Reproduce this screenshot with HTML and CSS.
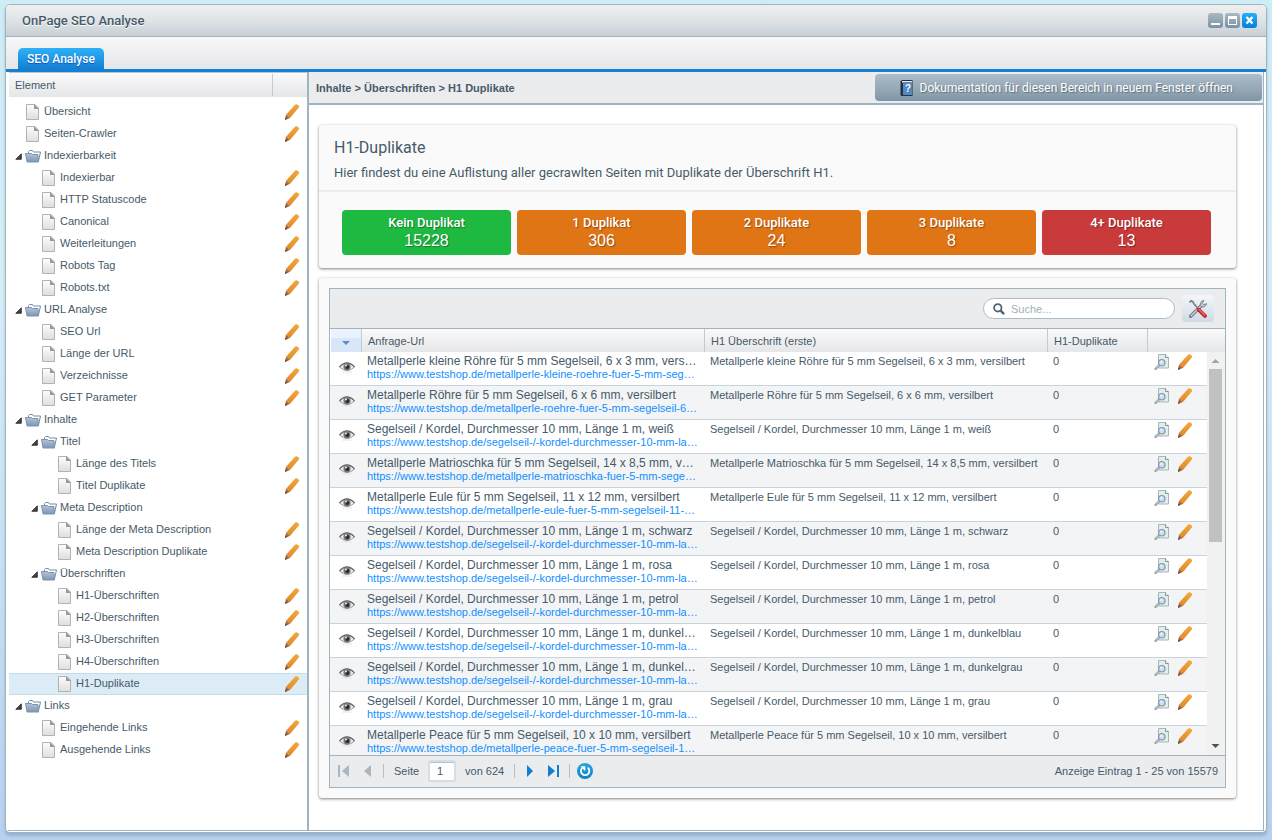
FILE: index.html
```html
<!DOCTYPE html>
<html lang="de">
<head>
  <meta charset="UTF-8" />
  <meta name="viewport" content="width=device-width, initial-scale=1" />
  <title>OnPage SEO Analyse</title>
  <link rel="stylesheet" href="styles.css">
</head>
<body>

  <!-- Icons -->
  <svg class="sprite" aria-hidden="true">
    <defs>
      <linearGradient id="gPage" x1="0" y1="0" x2="0" y2="1"><stop offset="0" stop-color="#fdfdfd"/><stop offset="1" stop-color="#dedede"/></linearGradient>
      <linearGradient id="gFolder" x1="0" y1="0" x2="0" y2="1"><stop offset="0" stop-color="#b3c3d6"/><stop offset="1" stop-color="#7d97b4"/></linearGradient>
      <linearGradient id="gPencil" x1="0" y1="0" x2="0" y2="1"><stop offset="0" stop-color="#f2a93c"/><stop offset="1" stop-color="#e0892b"/></linearGradient>
      <linearGradient id="gRefresh" x1="0" y1="0" x2="0" y2="1"><stop offset="0" stop-color="#29a5df"/><stop offset="1" stop-color="#0f80c2"/></linearGradient>
    </defs>
    <symbol id="i-page" viewBox="0 0 16 16">
      <path d="M1.500.5h8.500l3.500 3.500v11.500h-12z" fill="url(#gPage)" stroke="#b2b2b2"/>
      <path d="M9 0l5 5H9z" fill="#999"/>
    </symbol>
    <symbol id="i-folder" viewBox="0 0 16 16">
      <path d="M3.500 5V3.500l1-1h3l1 1.500h7L13.500 13" fill="#fff" stroke="#6f8ca8"/>
      <path d="M.5 5.500h6l1 1h5.500l.5 7.500H2z" fill="url(#gFolder)" stroke="#7b94b0"/>
    </symbol>
    <symbol id="i-arrow" viewBox="0 0 7 7">
      <path d="M.8 6.300h5.500V.8z" fill="#444" stroke="#222" stroke-width=".8"/>
    </symbol>
    <symbol id="i-pencil" viewBox="0 0 16 16">
      <path d="M11.200.6q1.200-.8 2.200 0l1.200 1q1 .9.200 2L6.200 13.800 2 10.700z" fill="url(#gPencil)"/>
      <path d="M2 10.700l4.200 3.100L1 16z" fill="#a9663e"/>
      <path d="M1.400 13.200L1 16l2.800-1.200z" fill="#75503f"/>
    </symbol>
    <symbol id="i-eye" viewBox="0 0 16 12">
      <path d="M.5 6Q8-2 15.500 6 8 13 .5 6z" fill="#ececec" stroke="#999"/>
      <path d="M.5 5.800Q8-2 15.500 5.800" fill="none" stroke="#666" stroke-width="1.200"/>
      <circle cx="8" cy="5.800" r="3.600" fill="#77757d"/>
      <circle cx="8.300" cy="6" r="2" fill="#2b2a30"/>
      <circle cx="7" cy="4.600" r="1" fill="#eee"/>
      <path d="M3 11h10" stroke="#e3e3e3"/>
    </symbol>
    <symbol id="i-preview" viewBox="0 0 16 16">
      <path d="M4.500.5h7l3 3v10.500h-10z" fill="#e3eeec" stroke="#a3b8b5"/>
      <path d="M11.500.5v3h3" fill="#fff" stroke="#7d9895"/>
      <path d="M1.600 14.800l3.400-3.300" stroke="#8d9c9e" stroke-width="2.400" stroke-linecap="round"/>
      <path d="M1.600 14.800l3.400-3.300" stroke="#e6ecec" stroke-width=".8"/>
      <circle cx="7.800" cy="8.700" r="3.200" fill="#c9def6" stroke="#8499a5" stroke-width="1.200"/>
      <circle cx="7.200" cy="8" r="1" fill="#f4f9ff"/>
    </symbol>
    <symbol id="i-search" viewBox="0 0 12 12">
      <circle cx="4.800" cy="4.800" r="3.700" fill="none" stroke="#4d6377" stroke-width="1.800"/>
      <path d="M7.600 7.600l3.500 3.500" stroke="#4d6377" stroke-width="2.400"/>
    </symbol>
    <symbol id="i-tools" viewBox="0 0 16 16">
      <path d="M1.500 14.500L11.500 4.500" stroke="#6f777e" stroke-width="3" stroke-linecap="round"/>
      <path d="M1.500 14.500L11.500 4.500" stroke="#c9ced2" stroke-width="1.400"/>
      <path d="M13.300.5L11.800 2.800l1.500 1.500 2.300-1.200a3.300 3.300 0 0 1-4.600 2.900A3.200 3.200 0 0 1 13.300.5z" fill="#c4c9cd" stroke="#777f86" stroke-width=".8"/>
      <path d="M.5 2.200L2 .6l1.800 1.200.2 1.200L8.500 8" fill="none" stroke="#7a8289" stroke-width="1.500"/>
      <path d="M8.700 8.700l5.500 5.500" stroke="#c62a2a" stroke-width="3.400" stroke-linecap="round"/>
      <path d="M8.700 8.200l5.500 5.500" stroke="#f07a72"/>
    </symbol>
    <symbol id="i-first" viewBox="0 0 12 12">
      <path d="M0 0h2v12H0z"/><path d="M11 0v12L4 6z"/>
    </symbol>
    <symbol id="i-prev" viewBox="0 0 12 12"><path d="M9 0v12L2 6z"/></symbol>
    <symbol id="i-next" viewBox="0 0 12 12"><path d="M3 0v12l6-6z"/></symbol>
    <symbol id="i-last" viewBox="0 0 12 12">
      <path d="M0 0v12l7-6z"/><path d="M9 0h2v12H9z"/>
    </symbol>
    <symbol id="i-refresh" viewBox="0 0 16 16">
      <circle cx="8" cy="8" r="8" fill="url(#gRefresh)"/>
      <path d="M10.800 4.800a4.200 4.200 0 1 1-5.500.1" fill="none" stroke="#fff" stroke-width="1.800"/>
      <path d="M3.500 3.200h4.800v5z" fill="#fff"/>
    </symbol>
  </svg>

  <div class="window">
    <header class="titlebar">
      <h1>OnPage SEO Analyse</h1>
      <div class="window-tools">
        <button class="tool" aria-label="Minimieren"><svg viewBox="0 0 15 15"><path d="M3 10h9v2H3z" fill="#fff"/></svg></button>
        <button class="tool" aria-label="Maximieren"><svg viewBox="0 0 15 15"><path d="M3 3h9v9H3zM4 6v5h7V6z" fill="#fff" fill-rule="evenodd"/></svg></button>
        <button class="tool close" aria-label="Schließen"><svg viewBox="0 0 15 15"><path d="M4.500 4l6 6.500M10.500 4l-6 6.500" stroke="#fff" stroke-width="2.400"/></svg></button>
      </div>
    </header>

    <nav class="tabs">
      <button class="tab">SEO Analyse</button>
    </nav>

    <div class="workspace">
      <aside class="sidebar">
        <div class="tree-head"><span>Element</span><span class="tree-head-edit"></span></div>
        <ul class="tree" id="tree"></ul>
      </aside>

      <main class="main">
        <div class="breadcrumb">
          <span>Inhalte &gt; Überschriften &gt; H1 Duplikate</span>
          <button class="btn-doc">
            <svg class="icon" viewBox="0 0 16 16">
              <path d="M1.500 1.500L3 0h10.500v16H2.500l-1-1z" fill="#23313f"/>
              <path d="M3 1h10v1.500H3z" fill="#dfe8ef"/>
              <path d="M4 2.500h9V15H4z" fill="#5189cb"/>
              <text x="6" y="12" class="book-mark">?</text>
            </svg>
            Dokumentation für diesen Bereich in neuem Fenster öffnen
          </button>
        </div>

        <div class="content">
          <section class="card">
            <div class="card-head">
              <h2>H1-Duplikate</h2>
              <p>Hier findest du eine Auflistung aller gecrawlten Seiten mit Duplikate der Überschrift H1.</p>
            </div>
            <div class="stats">
              <button class="stat green">Kein Duplikat<strong>15228</strong></button>
              <button class="stat">1 Duplikat<strong>306</strong></button>
              <button class="stat">2 Duplikate<strong>24</strong></button>
              <button class="stat">3 Duplikate<strong>8</strong></button>
              <button class="stat red">4+ Duplikate<strong>13</strong></button>
            </div>
          </section>

          <section class="card card-grid">
            <div class="grid">
              <div class="grid-toolbar">
                <label class="search">
                  <svg><use href="#i-search"/></svg>
                  <input type="text" placeholder="Suche..." aria-label="Suche" />
                </label>
                <button class="btn-tools" aria-label="Einstellungen"><svg><use href="#i-tools"/></svg></button>
              </div>

              <table class="grid-head">
                <thead>
                  <tr>
                    <th class="col-eye"><svg viewBox="0 0 8 4"><path d="M0 0h8L4 4z" fill="#5b8dd0"/></svg></th>
                    <th>Anfrage-Url</th>
                    <th>H1 Überschrift (erste)</th>
                    <th class="col-count">H1-Duplikate</th>
                    <th class="col-actions-head"></th>
                  </tr>
                </thead>
              </table>

              <div class="grid-body">
                <div class="rows">
                  <table>
                    <tbody id="rows"></tbody>
                  </table>
                </div>
                <div class="scrollbar">
                  <svg viewBox="0 0 17 17"><path d="M4.500 11h8L8.500 7z" fill="#a3a3a3"/></svg>
                  <div class="track"><div class="thumb"></div></div>
                  <svg viewBox="0 0 17 17"><path d="M4.500 6h8L8.500 10z" fill="#505050"/></svg>
                </div>
              </div>

              <footer class="paging">
                <button class="page-btn off" aria-label="Erste Seite"><svg><use href="#i-first"/></svg></button>
                <button class="page-btn off" aria-label="Vorherige Seite"><svg><use href="#i-prev"/></svg></button>
                <span class="sep"></span>
                <label for="seite">Seite</label>
                <input type="text" id="seite" value="1" />
                <span class="page-total">von 624</span>
                <span class="sep"></span>
                <button class="page-btn" aria-label="Nächste Seite"><svg><use href="#i-next"/></svg></button>
                <button class="page-btn" aria-label="Letzte Seite"><svg><use href="#i-last"/></svg></button>
                <span class="sep"></span>
                <button class="page-btn" aria-label="Aktualisieren"><svg class="icon"><use href="#i-refresh"/></svg></button>
                <span class="page-info">Anzeige Eintrag 1 - 25 von 15579</span>
              </footer>
            </div>
          </section>
        </div>
      </main>
    </div>
  </div>

  <script>
    // Baum: [Ebene, Name, Ordner?]
    const baum = [
      [0, "Übersicht"],
      [0, "Seiten-Crawler"],
      [0, "Indexierbarkeit", true],
      [1, "Indexierbar"],
      [1, "HTTP Statuscode"],
      [1, "Canonical"],
      [1, "Weiterleitungen"],
      [1, "Robots Tag"],
      [1, "Robots.txt"],
      [0, "URL Analyse", true],
      [1, "SEO Url"],
      [1, "Länge der URL"],
      [1, "Verzeichnisse"],
      [1, "GET Parameter"],
      [0, "Inhalte", true],
      [1, "Titel", true],
      [2, "Länge des Titels"],
      [2, "Titel Duplikate"],
      [1, "Meta Description", true],
      [2, "Länge der Meta Description"],
      [2, "Meta Description Duplikate"],
      [1, "Überschriften", true],
      [2, "H1-Überschriften"],
      [2, "H2-Überschriften"],
      [2, "H3-Überschriften"],
      [2, "H4-Überschriften"],
      [2, "H1-Duplikate"],
      [0, "Links", true],
      [1, "Eingehende Links"],
      [1, "Ausgehende Links"]
    ];
    const aktiv = "H1-Duplikate";

    // Zeilen: [Titel, Url, H1]
    const shop = "https://www.testshop.de/";
    const seiten = [
      ["Metallperle kleine Röhre für 5 mm Segelseil, 6 x 3 mm, vers…", "metallperle-kleine-roehre-fuer-5-mm-seg…", "Metallperle kleine Röhre für 5 mm Segelseil, 6 x 3 mm, versilbert"],
      ["Metallperle Röhre für 5 mm Segelseil, 6 x 6 mm, versilbert", "metallperle-roehre-fuer-5-mm-segelseil-6…", "Metallperle Röhre für 5 mm Segelseil, 6 x 6 mm, versilbert"],
      ["Segelseil / Kordel, Durchmesser 10 mm, Länge 1 m, weiß", "segelseil-/-kordel-durchmesser-10-mm-la…", "Segelseil / Kordel, Durchmesser 10 mm, Länge 1 m, weiß"],
      ["Metallperle Matrioschka für 5 mm Segelseil, 14 x 8,5 mm, v…", "metallperle-matrioschka-fuer-5-mm-sege…", "Metallperle Matrioschka für 5 mm Segelseil, 14 x 8,5 mm, versilbert"],
      ["Metallperle Eule für 5 mm Segelseil, 11 x 12 mm, versilbert", "metallperle-eule-fuer-5-mm-segelseil-11-…", "Metallperle Eule für 5 mm Segelseil, 11 x 12 mm, versilbert"],
      ["Segelseil / Kordel, Durchmesser 10 mm, Länge 1 m, schwarz", "segelseil-/-kordel-durchmesser-10-mm-la…", "Segelseil / Kordel, Durchmesser 10 mm, Länge 1 m, schwarz"],
      ["Segelseil / Kordel, Durchmesser 10 mm, Länge 1 m, rosa", "segelseil-/-kordel-durchmesser-10-mm-la…", "Segelseil / Kordel, Durchmesser 10 mm, Länge 1 m, rosa"],
      ["Segelseil / Kordel, Durchmesser 10 mm, Länge 1 m, petrol", "segelseil-/-kordel-durchmesser-10-mm-la…", "Segelseil / Kordel, Durchmesser 10 mm, Länge 1 m, petrol"],
      ["Segelseil / Kordel, Durchmesser 10 mm, Länge 1 m, dunkel…", "segelseil-/-kordel-durchmesser-10-mm-la…", "Segelseil / Kordel, Durchmesser 10 mm, Länge 1 m, dunkelblau"],
      ["Segelseil / Kordel, Durchmesser 10 mm, Länge 1 m, dunkel…", "segelseil-/-kordel-durchmesser-10-mm-la…", "Segelseil / Kordel, Durchmesser 10 mm, Länge 1 m, dunkelgrau"],
      ["Segelseil / Kordel, Durchmesser 10 mm, Länge 1 m, grau", "segelseil-/-kordel-durchmesser-10-mm-la…", "Segelseil / Kordel, Durchmesser 10 mm, Länge 1 m, grau"],
      ["Metallperle Peace für 5 mm Segelseil, 10 x 10 mm, versilbert", "metallperle-peace-fuer-5-mm-segelseil-1…", "Metallperle Peace für 5 mm Segelseil, 10 x 10 mm, versilbert"]
    ];

    function icon(name, cls = "icon") {
      return `<svg class="${cls}"><use href="#i-${name}"/></svg>`;
    }

    document.getElementById("tree").innerHTML = baum.map(([ebene, name, ordner]) => `
      <li class="node level-${ebene} ${name === aktiv ? "active" : ""}">
        <span class="toggle">${ordner ? icon("arrow", "arrow") : ""}</span>
        ${icon(ordner ? "folder" : "page")}
        <a href="#">${name}</a>
        ${ordner ? "" : `<button class="icon-btn" aria-label="${name} bearbeiten">${icon("pencil")}</button>`}
      </li>`).join("");

    document.getElementById("rows").innerHTML = seiten.map(([titel, url, h1]) => `
      <tr>
        <td class="col-eye">${icon("eye", "eye")}</td>
        <td class="col-url"><div class="page-title">${titel}</div><a href="#">${shop}${url}</a></td>
        <td class="col-h1">${h1}</td>
        <td class="col-count">0</td>
        <td class="col-actions">
          <div class="actions">
            <button class="icon-btn" aria-label="Vorschau">${icon("preview")}</button>
            <button class="icon-btn" aria-label="Bearbeiten">${icon("pencil")}</button>
          </div>
        </td>
      </tr>`).join("");
  </script>
</body>
</html>
```

FILE: styles.css
```css
* {
  box-sizing: border-box;
}

body {
  margin: 0;
  height: 100vh;
  padding: 4px 5px 7px 5px;
  display: flex;
  font-family: "Liberation Sans", Arial, sans-serif;
  font-size: 11px;
  color: #465a69;
  background: linear-gradient(#cdecf5, #d6eef6 35%, #b7d1ef);
}

button {
  border: none;
  padding: 0;
  background: none;
  font: inherit;
  cursor: pointer;
}

svg {
  display: block;
}

.sprite {
  position: absolute;
  width: 0;
  height: 0;
}

.icon {
  width: 16px;
  height: 16px;
  flex: none;
}

/* Fenster */
.window {
  flex: 1;
  min-width: 0;
  display: flex;
  flex-direction: column;
  background: #fff;
  border: 1px solid #a0b3c1;
  border-radius: 5px;
  overflow: hidden;
  box-shadow: 0 3px 3px rgba(90, 120, 150, 0.35);
}

.titlebar {
  flex: none;
  height: 32px;
  display: flex;
  align-items: center;
  justify-content: space-between;
  padding: 0 9px 0 16px;
  background: linear-gradient(#efefef, #dfe3e5 50%, #c7d0d7);
  border-bottom: 1px solid #a0b3c1;
}

.titlebar h1 {
  margin: 0;
  font-family: Roboto, sans-serif;
  font-size: 13px;
  font-weight: 500;
  line-height: 20px;
  text-shadow: 0 1px 0 #fff;
}

.window-tools {
  display: flex;
  gap: 2px;
}

.tool {
  width: 15px;
  height: 15px;
  border-radius: 3px;
  background: linear-gradient(#a9b9c4, #7c92a1);
}

.tool.close {
  background: linear-gradient(#22b0fb, #067ed8);
}

.tabs {
  flex: none;
  height: 35px;
  display: flex;
  align-items: flex-end;
  padding-left: 12px;
  background: linear-gradient(#f8f8f8, #e5e6e8);
  border-bottom: 3px solid #157fd3;
}

.tab {
  height: 21px;
  padding: 0 9px;
  border-radius: 5px 5px 0 0;
  background: linear-gradient(#2cb2f8, #157fd3);
  color: #fff;
  font-family: Roboto, sans-serif;
  font-size: 12px;
  font-weight: 500;
  text-shadow: 0 1px 1px #0a4fc0;
}

.workspace {
  flex: 1;
  min-height: 0;
  display: flex;
  margin: 0 2px 1px;
  border-bottom: 1px solid #a0b3c1;
}

/* Navigation links */
.sidebar {
  flex: none;
  width: 301px;
  border-right: 2px solid #a0b3c1;
  padding-left: 1px;
}

.tree-head {
  height: 25px;
  display: flex;
  align-items: center;
  justify-content: space-between;
  padding-left: 6px;
  border-top: 1px solid #b9c6d0;
  background: linear-gradient(#fafafa, #e5e6e8);
}

.tree-head-edit {
  width: 35px;
  height: 22px;
  border-left: 1px solid #c2cbd2;
}

.tree {
  list-style: none;
  margin: 0;
  padding: 4px 0;
}

.node {
  height: 22px;
  display: flex;
  align-items: center;
  padding-right: 7px;
  border-top: 1px solid transparent;
  border-bottom: 1px solid transparent;
}

.node.level-1 {
  padding-left: 16px;
}

.node.level-2 {
  padding-left: 32px;
}

.node.active {
  background: #dcecf6;
  border-color: #c6dbea;
}

.node a {
  flex: 1;
  padding: 0 0 2px 3px;
  color: inherit;
  line-height: 14px;
  text-decoration: none;
}

.toggle {
  width: 16px;
  padding-left: 6px;
}

.arrow {
  width: 7px;
  height: 7px;
}

/* Inhalt */
.main {
  flex: 1;
  min-width: 0;
  display: flex;
  flex-direction: column;
  border-right: 1px solid #a0b3c1;
}

.breadcrumb {
  flex: none;
  height: 33px;
  display: flex;
  align-items: center;
  justify-content: space-between;
  padding: 0 1px 0 7px;
  background: #ebecee;
  border-bottom: 2px solid #a0b3c1;
  font-weight: bold;
}

.btn-doc {
  display: flex;
  align-items: center;
  gap: 5px;
  height: 27px;
  padding: 0 29px 0 24px;
  border-radius: 4px;
  background: linear-gradient(#aebdc8, #8096a5);
  color: #fff;
  font-family: Roboto, sans-serif;
  font-size: 12px;
  font-weight: 400;
  text-shadow: 1px 1px 1px #5b6f7d;
}

.book-mark {
  font: bold 10px "Liberation Sans", sans-serif;
  fill: #fff;
}

.content {
  flex: 1;
  min-height: 0;
  display: flex;
  flex-direction: column;
  gap: 10px;
  padding: 20px 27px 32px 10px;
}

.card {
  background: #fafafa;
  border-radius: 3px;
  box-shadow: 0 1px 3px rgba(0, 0, 0, 0.5);
}

.card-head {
  padding: 13px 15px 7px;
  border-bottom: 2px solid #ececec;
}

.card-head h2 {
  margin: 0 0 5px;
  font: 400 16px/20px Roboto, sans-serif;
}

.card-head p {
  margin: 0;
  font: 400 13px/20px Roboto, sans-serif;
}

.stats {
  display: flex;
  gap: 6px;
  padding: 18px 25px 13px 23px;
}

.stat {
  flex: 1;
  height: 45px;
  border-radius: 4px;
  background: #df7514;
  color: #fff;
  font-family: Roboto, sans-serif;
  font-size: 13px;
  font-weight: 500;
  line-height: 16px;
  text-shadow: 1px 1px 1px rgba(0, 0, 0, 0.35);
}

.stat.green {
  background: #1eb941;
}

.stat.red {
  background: #c93a3a;
}

.stat strong {
  display: block;
  font: 400 16px/20px "Liberation Sans", Arial, sans-serif;
}

/* Tabelle */
.card-grid {
  flex: 1;
  min-height: 0;
  display: flex;
  padding: 10px;
}

.grid {
  flex: 1;
  min-width: 0;
  display: flex;
  flex-direction: column;
  border: 1px solid #a0b3c1;
  background: #ebecee;
}

.grid-toolbar {
  flex: none;
  height: 40px;
  display: flex;
  align-items: center;
  justify-content: flex-end;
  gap: 7px;
  padding: 0 11px;
  border-bottom: 1px solid #a0b3c1;
}

.search {
  width: 192px;
  height: 21px;
  display: flex;
  align-items: center;
  gap: 6px;
  padding: 0 9px;
  border: 1px solid #a9bccb;
  border-radius: 11px;
  background: #fff;
}

.search svg {
  width: 12px;
  height: 12px;
}

.search input {
  flex: 1;
  min-width: 0;
  border: none;
  padding: 0;
  outline: none;
  background: none;
  font: inherit;
}

.search input::placeholder {
  color: #9eafbc;
}

.btn-tools {
  width: 32px;
  height: 27px;
  padding: 0 7px;
  border-radius: 4px;
  background: linear-gradient(#f4f6f9, #cfdae5);
}

.btn-tools svg {
  width: 18px;
  height: 18px;
}

table {
  width: 100%;
  table-layout: fixed;
  border-collapse: separate;
  border-spacing: 0;
}

th,
td {
  padding: 0;
  text-align: left;
  font-weight: normal;
}

.grid-head {
  flex: none;
}

.grid-head th {
  height: 23px;
  padding-left: 6px;
  border-left: 1px solid #c2cbd2;
  background: linear-gradient(#fafafa, #e5e6e8);
}

.grid-head .col-eye {
  padding-left: 11px;
  border-left-color: #fff;
  background: linear-gradient(#eaf3fd 40%, #d8e7f8 40%);
}

.grid-head .col-eye svg {
  width: 8px;
  height: 4px;
  margin-top: 4px;
}

.col-eye {
  width: 31px;
}

.col-count {
  width: 100px;
}

.col-actions {
  width: 60px;
}

.col-actions-head {
  width: 78px;
}

.grid-body {
  flex: 1;
  min-height: 0;
  display: flex;
}

.rows {
  flex: 1;
  min-width: 0;
  overflow: hidden;
  background: #fff;
}

.rows tr:nth-child(even) {
  background: #f3f4f6;
}

.rows td {
  height: 34px;
  vertical-align: top;
  white-space: nowrap;
  padding: 3px 5px 0 6px;
  line-height: 13px;
  border-bottom: 1px solid #c9d3dc;
}

.rows td.col-eye {
  padding: 9px 0 0 9px;
}

.rows td.col-actions {
  padding: 2px 0 0 7px;
}

.eye {
  width: 16px;
  height: 12px;
}

.page-title {
  font-size: 12px;
}

.col-url a {
  display: block;
  color: #118fff;
  text-decoration: none;
}

.actions {
  display: flex;
  gap: 7px;
}

.scrollbar {
  flex: none;
  width: 18px;
  display: flex;
  flex-direction: column;
  background: #f1f1f1;
}

.scrollbar svg {
  width: 17px;
  height: 17px;
}

.track {
  flex: 1;
  padding: 0 3px 0 2px;
}

.thumb {
  height: 47%;
  background: #c1c1c1;
}

/* Blättern */
.paging {
  flex: none;
  height: 32px;
  display: flex;
  align-items: center;
  padding: 0 7px 1px 2px;
  border-top: 1px solid #a0b3c1;
}

.paging label,
.page-total {
  margin: 0 7px;
}

.paging input {
  width: 28px;
  height: 22px;
  margin: 0 2px;
  padding: 0 7px;
  border: 2px solid #d5dde5;
  border-radius: 3px;
  background: #fff;
  color: inherit;
  font: inherit;
  box-shadow: inset 0 1px 0 #b5c2cc;
}

.page-btn {
  width: 24px;
  height: 24px;
  display: flex;
  align-items: center;
  justify-content: center;
}

.page-btn svg:not(.icon) {
  width: 12px;
  height: 12px;
  fill: #0f7fd0;
}

.page-btn.off svg:not(.icon) {
  fill: #a9b7c1;
}

.sep {
  width: 1px;
  height: 14px;
  margin: 0 3px;
  background: #b4bfc8;
}

.page-info {
  margin-left: auto;
}
```
